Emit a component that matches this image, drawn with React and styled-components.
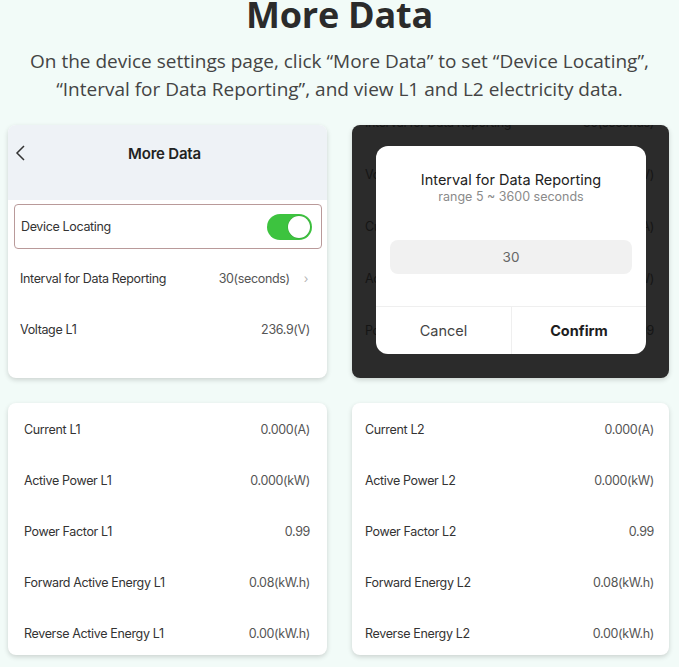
import React from 'react';
import styled, { createGlobalStyle } from 'styled-components';

const GlobalStyle = createGlobalStyle`
  html, body {
    margin: 0;
    padding: 0;
    background: #f2fbf8;
  }
  body {
    font-family: Inter, "Liberation Sans", Arial, sans-serif;
    overflow: hidden;
  }
`;

const Page = styled.div`
  width: 679px;
  height: 667px;
  overflow: hidden;
`;

const Heading = styled.h1`
  margin: 0;
  font-family: "Open Sans", "Liberation Sans", sans-serif;
  font-size: 36px;
  line-height: 30px;
  font-weight: 700;
  color: #2b2b2b;
  text-align: center;
  letter-spacing: -0.2px;
`;

const Intro = styled.p`
  margin: 17px 0 0;
  font-family: "Open Sans", "Liberation Sans", sans-serif;
  font-size: 19px;
  line-height: 28px;
  font-weight: 400;
  color: #444;
  text-align: center;
`;

const Grid = styled.div`
  display: grid;
  grid-template-columns: 319px 317px;
  grid-template-rows: 253px 252px;
  column-gap: 25px;
  row-gap: 25px;
  margin: 22px 0 0 8px;
`;

const Card = styled.div`
  position: relative;
  background: ${p => (p.$dark ? '#2b2b2b' : '#ffffff')};
  border-radius: 8px;
  box-shadow: 0 2px 5px rgba(0, 0, 0, 0.16);
  overflow: hidden;
  padding-top: ${p => p.$top || 0}px;
  box-sizing: border-box;
`;

const Header = styled.div`
  height: 75px;
  background: #eef2f6;
  display: flex;
  align-items: flex-start;
  padding-top: 20px;
  box-sizing: border-box;
`;

const BackIcon = styled.svg`
  margin-left: 3px;
  flex: none;
`;

const HeaderTitle = styled.div`
  flex: 1;
  text-align: center;
  margin-right: 26px;
  font-size: 15px;
  line-height: 18px;
  font-weight: 600;
  color: #222;
  letter-spacing: -0.2px;
`;

const Row = styled.div`
  height: ${p => p.$h || 51}px;
  display: flex;
  align-items: center;
  justify-content: space-between;
  padding: 0 ${p => p.$pr || 16}px 0 ${p => p.$pl || 16}px;
  font-size: 12.5px;
  letter-spacing: -0.35px;
  color: ${p => (p.$muted ? '#151515' : '#333')};
  box-sizing: border-box;
`;

const Value = styled.span`
  color: ${p => (p.$muted ? '#151515' : '#555')};
  display: flex;
  align-items: center;
`;

const HighlightRow = styled(Row)`
  margin: 4px 5px 4px 6px;
  border: 1px solid #b99a9a;
  border-radius: 4px;
  padding: 0 9px 0 6px;
`;

const Toggle = styled.div`
  width: 45px;
  height: 26px;
  border-radius: 13px;
  background: #3dc33f;
  display: flex;
  align-items: center;
  justify-content: flex-end;
  padding: 0 2px;
  box-sizing: border-box;
`;

const Knob = styled.div`
  width: 22px;
  height: 22px;
  border-radius: 50%;
  background: #fff;
  box-shadow: 0 0 0 0.5px rgba(0, 0, 0, 0.15);
`;

const Chevron = styled.span`
  margin-left: 14px;
  color: #b5b5b5;
  font-size: 12px;
`;

const BackList = styled.div`
  margin-top: -29px;
`;

const Dialog = styled.div`
  position: absolute;
  left: 24px;
  top: 21px;
  width: 270px;
  height: 208px;
  background: #fff;
  border-radius: 12px;
  display: flex;
  flex-direction: column;
  align-items: center;
  padding-top: 25px;
  box-sizing: border-box;
`;

const DialogTitle = styled.div`
  font-size: 14.5px;
  line-height: 18px;
  color: #222;
`;

const DialogHint = styled.div`
  font-size: 12.5px;
  line-height: 16px;
  color: #8a8a8a;
`;

const Field = styled.div`
  margin-top: 35px;
  width: 242px;
  height: 34px;
  border-radius: 8px;
  background: #f1f1f1;
  display: flex;
  align-items: center;
  justify-content: center;
  font-size: 13.5px;
  color: #666;
`;

const Actions = styled.div`
  margin-top: 32px;
  width: 100%;
  flex: 1;
  display: grid;
  grid-template-columns: 1fr 1fr;
  border-top: 1px solid #efefef;
`;

const Action = styled.div`
  display: flex;
  align-items: center;
  justify-content: center;
  font-size: 14.5px;
  font-weight: ${p => (p.$strong ? 700 : 400)};
  color: ${p => (p.$strong ? '#1e1e1e' : '#444')};
  & + & {
    border-left: 1px solid #efefef;
  }
`;

const l1 = [
  ['Current L1', '0.000(A)'],
  ['Active Power L1', '0.000(kW)'],
  ['Power Factor L1', '0.99'],
  ['Forward Active Energy L1', '0.08(kW.h)'],
  ['Reverse Active Energy L1', '0.00(kW.h)'],
];

const l2 = [
  ['Current L2', '0.000(A)'],
  ['Active Power L2', '0.000(kW)'],
  ['Power Factor L2', '0.99'],
  ['Forward Energy L2', '0.08(kW.h)'],
  ['Reverse Energy L2', '0.00(kW.h)'],
];

const behind = [
  ['Interval for Data Reporting', '30(seconds)'],
  ['Voltage L1', '236.9(V)'],
  ['Current L1', '0.000(A)'],
  ['Active Power L1', '0.000(kW)'],
  ['Power Factor L1', '0.99'],
];

export default function App() {
  return (
    <Page>
      <GlobalStyle />
      <Heading>More Data</Heading>
      <Intro>
        On the device settings page, click “More Data” to set “Device Locating”,
        <br />
        “Interval for Data Reporting”, and view L1 and L2 electricity data.
      </Intro>
      <Grid>
        <Card>
          <Header>
            <BackIcon width="17" height="16" viewBox="0 0 17 16">
              <polyline points="13,1 6,8 13,15" fill="none" stroke="#333" strokeWidth="1.5" />
            </BackIcon>
            <HeaderTitle>More Data</HeaderTitle>
          </Header>
          <HighlightRow $h={45}>
            <span>Device Locating</span>
            <Toggle>
              <Knob />
            </Toggle>
          </HighlightRow>
          <Row $pl={12} $pr={19}>
            <span>Interval for Data Reporting</span>
            <Value>
              30(seconds)
              <Chevron>›</Chevron>
            </Value>
          </Row>
          <Row $pl={12} $pr={17}>
            <span>Voltage L1</span>
            <Value>236.9(V)</Value>
          </Row>
        </Card>

        <Card $dark>
          <BackList>
            {behind.map(([k, v]) => (
              <Row key={k} $h={52} $pl={13} $pr={15} $muted>
                <span>{k}</span>
                <Value $muted>{v}</Value>
              </Row>
            ))}
          </BackList>
          <Dialog>
            <DialogTitle>Interval for Data Reporting</DialogTitle>
            <DialogHint>range 5 ~ 3600 seconds</DialogHint>
            <Field>30</Field>
            <Actions>
              <Action>Cancel</Action>
              <Action $strong>Confirm</Action>
            </Actions>
          </Dialog>
        </Card>

        <Card $top={1}>
          {l1.map(([k, v]) => (
            <Row key={k} $pl={16} $pr={17}>
              <span>{k}</span>
              <Value>{v}</Value>
            </Row>
          ))}
        </Card>

        <Card $top={1}>
          {l2.map(([k, v]) => (
            <Row key={k} $pl={13} $pr={15}>
              <span>{k}</span>
              <Value>{v}</Value>
            </Row>
          ))}
        </Card>
      </Grid>
    </Page>
  );
}
